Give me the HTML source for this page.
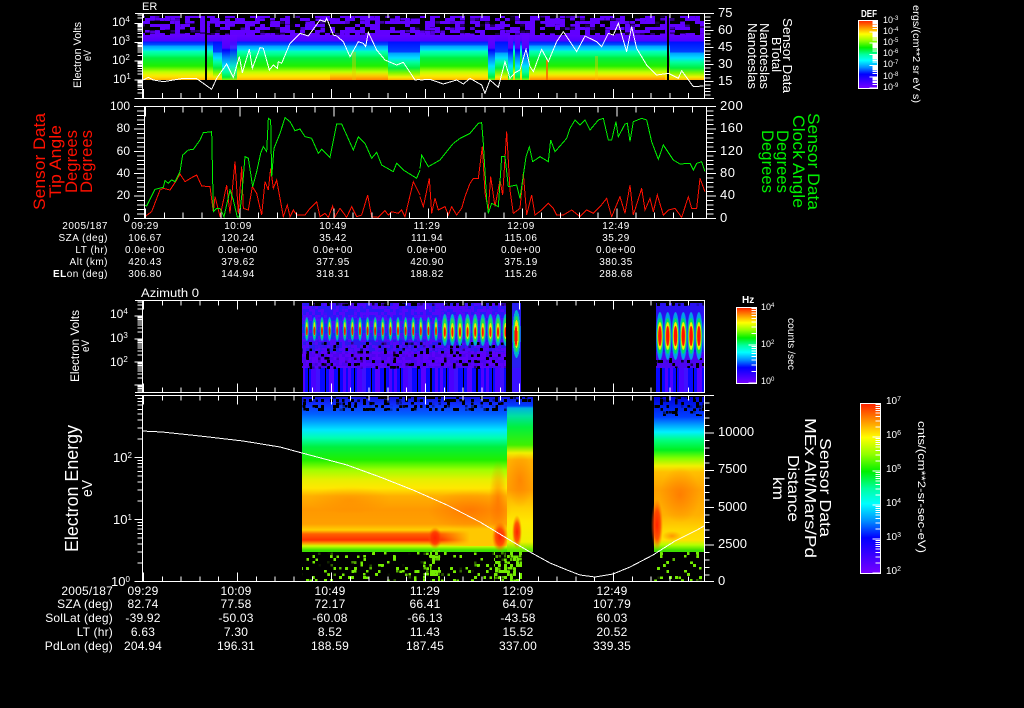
<!DOCTYPE html>
<html lang="en"><head><meta charset="utf-8"><title>Sensor Data</title>
<style>
html,body{margin:0;padding:0;background:#000;width:1024px;height:708px;overflow:hidden}
svg{display:block}
text{font-family:"Liberation Sans",sans-serif;fill:#fff}
.r10 text,.r10{font-size:10px;letter-spacing:.5px}
.r12 text,.r12{font-size:12px;letter-spacing:.2px}
.l{fill:none;stroke:#fff;stroke-width:1;shape-rendering:crispEdges}
.d{fill:none;vector-effect:non-scaling-stroke;stroke-width:1;shape-rendering:crispEdges}
</style></head><body>
<svg xmlns="http://www.w3.org/2000/svg" width="1024" height="708" viewBox="0 0 1024 708">
<defs>
<filter id="nP" filterUnits="userSpaceOnUse" x="0" y="0" width="1024" height="708" color-interpolation-filters="sRGB">
<feTurbulence type="fractalNoise" baseFrequency=".11 .2" numOctaves="2" seed="4"/>
<feColorMatrix values="0 0 0 0 .38 0 0 0 0 0 0 0 0 0 1 30 0 0 0 -14.5" result="n"/>
<feFlood x="2" y="1" width="1" height="1" flood-color="#fff"/><feComposite width="5" height="3"/><feTile result="t"/>
<feComposite in="n" in2="t" operator="in"/><feMorphology operator="dilate" radius="2 1"/><feComposite in2="SourceAlpha" operator="in"/>
</filter>
<filter id="nB" filterUnits="userSpaceOnUse" x="0" y="0" width="1024" height="708" color-interpolation-filters="sRGB">
<feTurbulence type="fractalNoise" baseFrequency=".3" numOctaves="2" seed="31"/>
<feColorMatrix values="0 0 0 0 .4 0 0 0 0 0 0 0 0 0 1 30 0 0 0 -15" result="n"/>
<feFlood x="1" y="1" width="1" height="1" flood-color="#fff"/><feComposite width="3" height="3"/><feTile result="t"/>
<feComposite in="n" in2="t" operator="in"/><feMorphology operator="dilate" radius="1"/><feComposite in2="SourceAlpha" operator="in"/>
</filter>
<filter id="nK" filterUnits="userSpaceOnUse" x="0" y="0" width="1024" height="708" color-interpolation-filters="sRGB">
<feTurbulence type="fractalNoise" baseFrequency=".27" numOctaves="2" seed="9"/>
<feColorMatrix values="0 0 0 0 0 0 0 0 0 0 0 0 0 0 0 30 0 0 0 -17" result="n"/>
<feFlood x="1" y="1" width="1" height="1" flood-color="#fff"/><feComposite width="3" height="3"/><feTile result="t"/>
<feComposite in="n" in2="t" operator="in"/><feMorphology operator="dilate" radius="1"/><feComposite in2="SourceAlpha" operator="in"/>
</filter>
<filter id="nK2" filterUnits="userSpaceOnUse" x="0" y="0" width="1024" height="708" color-interpolation-filters="sRGB">
<feTurbulence type="fractalNoise" baseFrequency=".3" numOctaves="2" seed="17"/>
<feColorMatrix values="0 0 0 0 0 0 0 0 0 0 0 0 0 0 0 30 0 0 0 -19" result="n"/>
<feFlood x="1" y="1" width="1" height="1" flood-color="#fff"/><feComposite width="3" height="3"/><feTile result="t"/>
<feComposite in="n" in2="t" operator="in"/><feMorphology operator="dilate" radius="1"/><feComposite in2="SourceAlpha" operator="in"/>
</filter>
<filter id="nG" filterUnits="userSpaceOnUse" x="0" y="0" width="1024" height="708" color-interpolation-filters="sRGB">
<feTurbulence type="fractalNoise" baseFrequency=".3" numOctaves="2" seed="12"/>
<feColorMatrix values="0 0 0 0 .45 0 0 0 0 .92 0 0 0 0 0 30 0 0 0 -19.5" result="n"/>
<feFlood x="1" y="1" width="1" height="1" flood-color="#fff"/><feComposite width="3" height="3"/><feTile result="t"/>
<feComposite in="n" in2="t" operator="in"/><feMorphology operator="dilate" radius="1"/><feComposite in2="SourceAlpha" operator="in"/>
</filter>
<filter id="nD" filterUnits="userSpaceOnUse" x="0" y="0" width="1024" height="708" color-interpolation-filters="sRGB">
<feTurbulence type="fractalNoise" baseFrequency=".3" numOctaves="2" seed="21"/>
<feColorMatrix values="0 0 0 0 .45 0 0 0 0 .92 0 0 0 0 0 30 0 0 0 -15.5" result="n"/>
<feFlood x="1" y="1" width="1" height="1" flood-color="#fff"/><feComposite width="3" height="3"/><feTile result="t"/>
<feComposite in="n" in2="t" operator="in"/><feMorphology operator="dilate" radius="1"/><feComposite in2="SourceAlpha" operator="in"/>
</filter>

<linearGradient id="cb" x1="0" y1="0" x2="0" y2="1">
<stop offset="0" stop-color="#ff2000"/><stop offset=".1" stop-color="#ff9000"/><stop offset=".2" stop-color="#ffff00"/><stop offset=".3" stop-color="#90ff00"/><stop offset=".4" stop-color="#00f000"/><stop offset=".5" stop-color="#00ffa0"/><stop offset=".59" stop-color="#00ffff"/><stop offset=".69" stop-color="#0090ff"/><stop offset=".79" stop-color="#0000ff"/><stop offset="1" stop-color="#7800ff"/>
</linearGradient>

<linearGradient id="er" gradientUnits="userSpaceOnUse" x1="0" y1="14" x2="0" y2="114">
<stop offset=".2" stop-color="#6a00ff"/><stop offset=".27" stop-color="#5000ff"/><stop offset=".28" stop-color="#0020ff"/><stop offset=".31" stop-color="#0050ff"/><stop offset=".32" stop-color="#00a0ff"/><stop offset=".36" stop-color="#00d8ff"/><stop offset=".37" stop-color="#00ffc0"/><stop offset=".41" stop-color="#00ff80"/><stop offset=".44" stop-color="#00f040"/><stop offset=".52" stop-color="#20f000"/><stop offset=".55" stop-color="#70f800"/><stop offset=".58" stop-color="#c0ff00"/><stop offset=".61" stop-color="#f0f000"/><stop offset=".63" stop-color="#ffe000"/><stop offset=".66" stop-color="#ffb000"/>
</linearGradient>
<linearGradient id="erM" gradientUnits="userSpaceOnUse" x1="0" y1="14" x2="0" y2="114">
<stop offset=".2" stop-color="#6a00ff"/><stop offset=".27" stop-color="#5000ff"/><stop offset=".28" stop-color="#0010ff"/><stop offset=".38" stop-color="#0040ff"/><stop offset=".39" stop-color="#00a0ff"/><stop offset=".44" stop-color="#00e0ff"/><stop offset=".48" stop-color="#00ffa0"/><stop offset=".54" stop-color="#00f040"/><stop offset=".59" stop-color="#80f800"/><stop offset=".63" stop-color="#f0f000"/><stop offset=".66" stop-color="#ffb000"/>
</linearGradient>
<linearGradient id="erL" gradientUnits="userSpaceOnUse" x1="0" y1="14" x2="0" y2="114">
<stop offset=".2" stop-color="#6a00ff"/><stop offset=".34" stop-color="#5000ff"/><stop offset=".36" stop-color="#0000ff"/><stop offset=".44" stop-color="#0080ff"/><stop offset=".52" stop-color="#00e0ff"/><stop offset=".58" stop-color="#00ffa0"/><stop offset=".63" stop-color="#00f040"/><stop offset=".66" stop-color="#80f800"/>
</linearGradient>
<linearGradient id="orb" x1="0" y1="0" x2="0" y2="1"><stop offset="0" stop-color="#ffa000" stop-opacity="0"/><stop offset="1" stop-color="#ff7000"/></linearGradient>

<linearGradient id="g4a" gradientUnits="userSpaceOnUse" x1="0" y1="396" x2="0" y2="596">
<stop offset=".005" stop-color="#1010e0"/><stop offset=".045" stop-color="#1030ff"/><stop offset=".09" stop-color="#0060ff"/><stop offset=".13" stop-color="#00a0ff"/><stop offset=".17" stop-color="#00e8ff"/><stop offset=".21" stop-color="#00ffb0"/><stop offset=".255" stop-color="#00f040"/><stop offset=".32" stop-color="#20f000"/><stop offset=".37" stop-color="#a0ff00"/><stop offset=".42" stop-color="#e8f000"/><stop offset=".46" stop-color="#ffe800"/><stop offset=".5" stop-color="#ffb000"/><stop offset=".57" stop-color="#ff9800"/><stop offset=".64" stop-color="#ffa000"/><stop offset=".67" stop-color="#ffd000"/><stop offset=".69" stop-color="#ff6000"/><stop offset=".72" stop-color="#ff3000"/><stop offset=".735" stop-color="#ff9000"/><stop offset=".75" stop-color="#d0ff00"/><stop offset=".77" stop-color="#40e000"/>
</linearGradient>
<linearGradient id="g4y" gradientUnits="userSpaceOnUse" x1="440" y1="0" x2="470" y2="0"><stop offset="0" stop-color="#ffc000" stop-opacity="0"/><stop offset="1" stop-color="#ffc800"/></linearGradient>
<linearGradient id="g4b" gradientUnits="userSpaceOnUse" x1="0" y1="396" x2="0" y2="596">
<stop offset=".005" stop-color="#1010e0"/><stop offset=".05" stop-color="#0040ff"/><stop offset=".06" stop-color="#00b0e0"/><stop offset=".1" stop-color="#00e0a0"/><stop offset=".155" stop-color="#00f040"/><stop offset=".245" stop-color="#40f000"/><stop offset=".285" stop-color="#f0f000"/><stop offset=".32" stop-color="#ffb000"/><stop offset=".47" stop-color="#ffa000"/><stop offset=".56" stop-color="#ffd000"/><stop offset=".63" stop-color="#ffe800"/><stop offset=".73" stop-color="#f0f000"/><stop offset=".77" stop-color="#60e800"/>
</linearGradient>
<linearGradient id="g4c" gradientUnits="userSpaceOnUse" x1="0" y1="396" x2="0" y2="596">
<stop offset=".005" stop-color="#0000e0"/><stop offset=".105" stop-color="#0040ff"/><stop offset=".145" stop-color="#00a0ff"/><stop offset=".18" stop-color="#00f0ff"/><stop offset=".22" stop-color="#00ff80"/><stop offset=".27" stop-color="#00f020"/><stop offset=".31" stop-color="#80ff00"/><stop offset=".35" stop-color="#f0f000"/><stop offset=".38" stop-color="#ffc000"/><stop offset=".47" stop-color="#ffa000"/><stop offset=".595" stop-color="#ffb000"/><stop offset=".67" stop-color="#ffd800"/><stop offset=".72" stop-color="#ffe000"/><stop offset=".745" stop-color="#b0ff00"/><stop offset=".77" stop-color="#40e000"/>
</linearGradient>
<radialGradient id="rg"><stop offset="0" stop-color="#ff2000"/><stop offset=".55" stop-color="#ff3000" stop-opacity=".8"/><stop offset="1" stop-color="#ff6000" stop-opacity="0"/></radialGradient>
<radialGradient id="og"><stop offset="0" stop-color="#ff6000" stop-opacity=".55"/><stop offset="1" stop-color="#ff6000" stop-opacity="0"/></radialGradient>

<pattern id="b1" patternUnits="userSpaceOnUse" x="303" y="316" width="7.6" height="27">
<ellipse cx="3.8" cy="13" rx="2" ry="12" fill="#00a0e0"/><ellipse cx="3.8" cy="13" rx="1.4" ry="10" fill="#00e070"/><ellipse cx="3.8" cy="13" rx="1" ry="7" fill="#e0f000"/><ellipse cx="3.8" cy="15" rx=".9" ry="4.5" fill="#ff1000"/>
</pattern>
<pattern id="b2" patternUnits="userSpaceOnUse" x="441" y="312" width="7.6" height="38">
<ellipse cx="3.8" cy="18" rx="3" ry="16" fill="#00b0d0"/><ellipse cx="3.8" cy="18" rx="2.2" ry="12" fill="#20e050"/><ellipse cx="3.8" cy="19" rx="1.6" ry="8" fill="#f0e800"/><ellipse cx="3.8" cy="20" rx="1" ry="5" fill="#ff1000"/>
</pattern>
<pattern id="b3" patternUnits="userSpaceOnUse" x="656" y="304" width="7.8" height="62">
<ellipse cx="3.9" cy="32" rx="3.7" ry="24" fill="#00a0e8"/><ellipse cx="3.9" cy="32" rx="3.1" ry="18" fill="#00e060"/><ellipse cx="3.9" cy="32" rx="2.5" ry="14" fill="#f0f000"/><ellipse cx="3.9" cy="32" rx="1.8" ry="10" fill="#ff1000"/>
</pattern>
<pattern id="st" patternUnits="userSpaceOnUse" x="302" y="368" width="46" height="24">
<rect width="46" height="24" fill="#0808ff"/><rect x="0" width="3" height="24" fill="#5000ff"/><rect x="6" width="1" height="24" fill="#000"/><rect x="9" width="5" height="24" fill="#4a00ff"/><rect x="14" width="4" height="24" fill="#4010ff"/><rect x="23" width="1" height="24" fill="#000"/><rect x="27" width="5" height="24" fill="#5a00ff"/><rect x="36" width="2" height="24" fill="#000"/><rect x="41" width="3" height="24" fill="#5000ff"/>
</pattern>

<path id="lg" class="d" stroke="#fff" d="M-5 -30.1H0M-5 -47.7H0M-5 -60.2H0M-5 -69.9H0M-5 -77.8H0M-5 -84.5H0M-5 -90.3H0M-5 -95.4H0M-8 0H0"/>
<clipPath id="c1"><rect x="120" y="13" width="30" height="86"/></clipPath>
<clipPath id="c3"><rect x="120" y="300" width="30" height="93"/></clipPath>
<clipPath id="c4"><rect x="120" y="395" width="30" height="188"/></clipPath>
</defs>

<rect width="1024" height="708" fill="#000"/>

<!-- PANEL 1 -->
<rect x="142" y="16" width="562" height="22" filter="url(#nP)"/>
<rect x="142" y="35" width="562" height="45" fill="url(#er)"/>
<g shape-rendering="crispEdges">
<rect x="388" y="35" width="32" height="45" fill="url(#erM)"/>
<rect x="670" y="35" width="34" height="45" fill="url(#erM)"/>
<rect x="213" y="35" width="9" height="45" fill="url(#erM)"/>
<rect x="222" y="35" width="8" height="45" fill="url(#erL)"/>
<rect x="230" y="35" width="7" height="45" fill="url(#erL)" opacity=".8"/>
<rect x="488" y="35" width="7" height="45" fill="url(#erL)"/>
<rect x="495" y="35" width="13" height="45" fill="url(#erM)"/>
<rect x="508" y="35" width="5" height="45" fill="url(#erL)"/>
<rect x="515" y="35" width="5" height="45" fill="url(#erL)"/>
<rect x="522" y="35" width="7" height="45" fill="url(#erL)"/>
<rect x="330" y="72" width="58" height="8" fill="url(#orb)" opacity=".7"/>
<rect x="530" y="74" width="135" height="6" fill="url(#orb)" opacity=".6"/>
<rect x="352" y="52" width="4" height="28" fill="#e8c800" opacity=".4"/>
<rect x="546" y="60" width="2" height="20" fill="#ff6000" opacity=".8"/>
<rect x="595" y="56" width="3" height="24" fill="#ffc000" opacity=".4"/>
<rect x="205" y="14" width="2" height="67" fill="#000"/>
<rect x="667" y="14" width="2" height="67" fill="#000"/>
</g>
<g fill="none" stroke="#fff" stroke-width="1" shape-rendering="crispEdges">
<polyline class="d" stroke="#fff" transform="scale(.33333)" points="430,240 445,232 460,240 490,245 520,240 545,236 590,236 610,250 635,268 650,235 680,192 700,232 718,170 727,218 748,148 757,205 780,143 790,145 808,210 820,195 832,205 835,185 845,190 870,130 900,100 925,108 960,60 975,65 980,55 1000,105 1010,108 1030,125 1050,170 1075,125 1090,130 1097,140 1105,97 1130,150 1155,180 1190,195 1210,187 1245,240 1260,238"/>
<polyline class="d" stroke="#fff" transform="translate(420,0) scale(.33333)" points="0,240 30,238 70,252 110,240 130,252 150,235 185,255 195,280 210,240 235,262 255,185 270,235 285,218 300,210 318,148 330,200 340,215 365,148 385,185 410,125 430,95 470,155 495,108 530,125 545,140 565,100 580,105 595,70 620,155 635,80 650,145 680,195 710,225 745,220 775,235 785,212 820,260 850,258"/>
</g>
<g class="l">
<path d="M135 13.5H714M142 98.5H714M142.5 13V98M704.5 13V98"/>
<g clip-path="url(#c1)"><use href="#lg" transform="translate(142.5,98.5) scale(1,.187)"/><use href="#lg" transform="translate(142.5,79.8) scale(1,.187)"/><use href="#lg" transform="translate(142.5,61.1) scale(1,.187)"/><use href="#lg" transform="translate(142.5,42.4) scale(1,.187)"/><use href="#lg" transform="translate(142.5,23.7) scale(1,.187)"/><use href="#lg" transform="translate(142.5,5) scale(1,.187)"/></g>
<path d="M143 95.5H705" stroke-width="5" stroke-dasharray="1 17.8"/>
<path d="M143 93.5H705" stroke-width="9" stroke-dasharray="1 93"/>
<path d="M143 16H705" stroke-width="4" stroke-dasharray="1 17.8"/>
<path d="M707.5 13V99" stroke-width="6" stroke-dasharray="1 2.4"/>
<path d="M709 13V99" stroke-width="9" stroke-dasharray="1 16"/>
</g>
<text x="142" y="10" font-size="11">ER</text>
<g font-size="12"><text x="112" y="26">10<tspan dy="-4" font-size="8">4</tspan></text><text x="112" y="45">10<tspan dy="-4" font-size="8">3</tspan></text><text x="112" y="64">10<tspan dy="-4" font-size="8">2</tspan></text><text x="113" y="83">10<tspan dy="-4" font-size="8">1</tspan></text></g>
<g font-size="13"><text x="718" y="17">75</text><text x="718" y="34">60</text><text x="718" y="51">45</text><text x="718" y="68">30</text><text x="718" y="85">15</text></g>
<text transform="translate(81,88) rotate(-90)" font-size="11" textLength="66" lengthAdjust="spacingAndGlyphs">Electron Volts</text>
<text transform="translate(91,61) rotate(-90)" font-size="11" textLength="11" lengthAdjust="spacingAndGlyphs">eV</text>
<g font-size="12.5">
<text transform="translate(783,18) rotate(90)" textLength="75" lengthAdjust="spacingAndGlyphs">Sensor Data</text>
<text transform="translate(772,37) rotate(90)" textLength="35" lengthAdjust="spacingAndGlyphs">BTotal</text>
<text transform="translate(760,23) rotate(90)" textLength="66" lengthAdjust="spacingAndGlyphs">Nanoteslas</text>
<text transform="translate(748,23) rotate(90)" textLength="66" lengthAdjust="spacingAndGlyphs">Nanoteslas</text>
</g>

<!-- top colourbar -->
<rect x="858.5" y="20.5" width="19" height="68" fill="url(#cb)" stroke="#fff" shape-rendering="crispEdges"/>
<g class="l"><use href="#lg" transform="translate(877.5,88) scale(1,.112)"/><use href="#lg" transform="translate(877.5,76.8) scale(1,.112)"/><use href="#lg" transform="translate(877.5,65.6) scale(1,.112)"/><use href="#lg" transform="translate(877.5,54.4) scale(1,.112)"/><use href="#lg" transform="translate(877.5,43.2) scale(1,.112)"/><use href="#lg" transform="translate(877.5,32) scale(1,.112)"/></g>
<text x="861" y="17" font-size="10" font-weight="bold" textLength="16" lengthAdjust="spacingAndGlyphs">DEF</text>
<g font-size="9"><text x="883" y="23">10<tspan dy="-3" font-size="6">-3</tspan></text><text x="883" y="34">10<tspan dy="-3" font-size="6">-4</tspan></text><text x="883" y="45">10<tspan dy="-3" font-size="6">-5</tspan></text><text x="883" y="56">10<tspan dy="-3" font-size="6">-6</tspan></text><text x="883" y="67">10<tspan dy="-3" font-size="6">-7</tspan></text><text x="883" y="79">10<tspan dy="-3" font-size="6">-8</tspan></text><text x="883" y="90">10<tspan dy="-3" font-size="6">-9</tspan></text></g>
<text transform="translate(913,5) rotate(90)" font-size="10" textLength="98" lengthAdjust="spacingAndGlyphs">ergs/(cm**2 sr eV s)</text>

<!-- PANEL 2 -->
<g fill="none" stroke-width="1" shape-rendering="crispEdges">
<polyline class="d" stroke="#ff1000" transform="translate(0,100) scale(.33333)" points="432,352 455,335 480,270 490,265 510,270 530,240 540,222 555,245 580,230 590,225 605,258 630,260 640,335 645,290 660,350 680,255 690,340 705,185 715,340 725,200 730,325 745,330 757,260 770,280 785,345 795,245 805,270 812,205 820,265 830,240 850,350 862,315 870,350 880,330 890,345 915,345 930,325 950,305 960,350 975,340 985,352 998,318 1005,350 1020,325 1040,352 1055,320 1070,350 1085,345 1103,285 1115,350 1135,352 1155,332 1165,345 1175,335 1195,340 1205,330 1215,350 1240,245 1260,285"/>
<polyline class="d" stroke="#ff1000" transform="translate(420,100) scale(.33333)" points="0,290 10,320 28,235 35,340 45,295 55,330 75,320 85,345 95,320 110,345 125,325 135,290 150,250 160,235 175,235 187,140 195,280 205,330 212,230 225,320 240,240 248,285 260,95 270,270 280,340 300,325 310,220 320,345 335,285 345,345 365,330 385,310 400,325 410,345 430,345 455,330 480,350 500,330 520,340 540,320 560,295 575,350 600,290 615,340 630,255 640,345 665,265 675,330 690,295 700,335 712,285 730,345 745,330 765,325 785,352 805,290 815,325 830,325 840,235 855,275"/>
<polyline class="d" stroke="#00f000" transform="translate(0,100) scale(.33333)" points="432,315 440,318 465,268 490,262 495,242 505,250 515,240 525,245 540,215 548,165 565,150 580,148 600,120 610,98 635,95 640,335 650,325 660,325 672,350 690,270 700,300 712,352 718,350 725,290 735,170 745,175 758,260 770,215 782,160 790,140 800,155 805,55 812,60 815,230 822,145 840,100 855,53 870,65 885,92 900,87 915,110 935,115 955,160 965,148 990,172 1010,72 1025,72 1060,150 1075,110 1095,130 1115,175 1130,157 1145,195 1180,215 1190,190 1210,210 1250,235 1260,210"/>
<polyline class="d" stroke="#00f000" transform="translate(420,100) scale(.33333)" points="0,205 5,165 25,200 60,180 100,130 120,115 150,100 175,70 185,68 190,130 200,300 205,340 215,310 235,320 245,170 255,170 265,260 290,255 300,295 318,170 328,140 338,185 360,170 385,185 392,120 405,155 440,115 450,85 465,60 480,75 495,60 510,90 535,60 550,55 565,120 575,120 588,65 595,110 615,72 622,70 630,125 640,65 665,55 680,60 695,125 715,178 730,135 760,180 780,192 810,190 820,210 830,190 845,185 855,215"/>
</g>
<g class="l">
<path d="M134 106.5H716M134 218.5H716M144.5 106V218M706.5 106V218"/>
<path d="M140.5 106V219" stroke-width="7" stroke-dasharray="1 3.48"/>
<path d="M139 106V219" stroke-width="10" stroke-dasharray="1 21.4"/>
<path d="M710 106V219" stroke-width="7" stroke-dasharray="1 3.48"/>
<path d="M711 106V219" stroke-width="10" stroke-dasharray="1 21.4"/>
<path d="M145 215.5H707" stroke-width="6" stroke-dasharray="1 17.86"/>
<path d="M145 213.5H707" stroke-width="10" stroke-dasharray="1 93.3"/>
<path d="M145 109.5H707" stroke-width="6" stroke-dasharray="1 17.86"/>
<path d="M145 111.5H707" stroke-width="10" stroke-dasharray="1 93.3"/>
</g>
<g font-size="12" text-anchor="end"><text x="130" y="110">100</text><text x="130" y="132">80</text><text x="130" y="155">60</text><text x="130" y="177">40</text><text x="130" y="199">20</text><text x="130" y="222">0</text></g>
<g font-size="13" letter-spacing=".5"><text x="720" y="110">200</text><text x="720" y="132">160</text><text x="720" y="155">120</text><text x="720" y="177">80</text><text x="720" y="199">40</text><text x="720" y="222">0</text></g>
<g font-size="16.5">
<text style="fill:#ff1000" transform="translate(45,210) rotate(-90)" textLength="97" lengthAdjust="spacingAndGlyphs">Sensor Data</text>
<text style="fill:#ff1000" transform="translate(61,198) rotate(-90)" textLength="73" lengthAdjust="spacingAndGlyphs">Tip Angle</text>
<text style="fill:#ff1000" transform="translate(77,193) rotate(-90)" textLength="63" lengthAdjust="spacingAndGlyphs">Degrees</text>
<text style="fill:#ff1000" transform="translate(92,193) rotate(-90)" textLength="63" lengthAdjust="spacingAndGlyphs">Degrees</text>
</g>
<g font-size="16.5">
<text style="fill:#00f000" transform="translate(808,113) rotate(90)" textLength="97" lengthAdjust="spacingAndGlyphs">Sensor Data</text>
<text style="fill:#00f000" transform="translate(793,115) rotate(90)" textLength="93" lengthAdjust="spacingAndGlyphs">Clock Angle</text>
<text style="fill:#00f000" transform="translate(777,130) rotate(90)" textLength="63" lengthAdjust="spacingAndGlyphs">Degrees</text>
<text style="fill:#00f000" transform="translate(762,130) rotate(90)" textLength="63" lengthAdjust="spacingAndGlyphs">Degrees</text>
</g>
<g class="r10" text-anchor="end"><text x="108" y="229">2005/187</text><text x="108" y="241">SZA (deg)</text><text x="108" y="253">LT (hr)</text><text x="108" y="265">Alt (km)</text><text x="108" y="277"><tspan font-weight="bold">EL</tspan>on (deg)</text></g>
<g class="r10" text-anchor="middle">
<text x="145" y="229">09:29</text><text x="238" y="229">10:09</text><text x="333" y="229">10:49</text><text x="427" y="229">11:29</text><text x="521" y="229">12:09</text><text x="616" y="229">12:49</text>
<text x="145" y="241">106.67</text><text x="238" y="241">120.24</text><text x="333" y="241">35.42</text><text x="427" y="241">111.94</text><text x="521" y="241">115.06</text><text x="616" y="241">35.29</text>
<text x="145" y="253">0.0e+00</text><text x="238" y="253">0.0e+00</text><text x="333" y="253">0.0e+00</text><text x="427" y="253">0.0e+00</text><text x="521" y="253">0.0e+00</text><text x="616" y="253">0.0e+00</text>
<text x="145" y="265">420.43</text><text x="238" y="265">379.62</text><text x="333" y="265">377.95</text><text x="427" y="265">420.90</text><text x="521" y="265">375.19</text><text x="616" y="265">380.35</text>
<text x="145" y="277">306.80</text><text x="238" y="277">144.94</text><text x="333" y="277">318.31</text><text x="427" y="277">188.82</text><text x="521" y="277">115.26</text><text x="616" y="277">288.68</text>
</g>

<!-- PANEL 3 -->
<g shape-rendering="crispEdges">
<rect x="302" y="303" width="204" height="17" fill="#2818f8"/>
<rect x="302" y="320" width="204" height="20" fill="#1430f0"/>
<rect x="302" y="340" width="204" height="12" fill="#2a18f0"/>
<rect x="302" y="352" width="204" height="16" fill="#4c04f0"/>
<rect x="512" y="303" width="9" height="65" fill="#2820f0"/>
<rect x="656" y="303" width="48" height="65" fill="#2810f0"/>
<rect x="656" y="352" width="48" height="16" fill="#4c04f0"/>
<rect x="303" y="368" width="203" height="24" fill="url(#st)"/>
<rect x="512" y="368" width="9" height="24" fill="#3810ff"/>
<rect x="656" y="368" width="48" height="24" fill="url(#st)"/>
<rect x="302" y="303" width="204" height="65" filter="url(#nB)" opacity=".7"/>
<rect x="302" y="302" width="204" height="4" filter="url(#nK)"/>
<rect x="302" y="342" width="204" height="27" filter="url(#nK2)"/>
<rect x="656" y="302" width="48" height="4" filter="url(#nK)"/>
<rect x="656" y="358" width="48" height="10" filter="url(#nK2)"/>
<rect x="303" y="316" width="138" height="27" fill="url(#b1)"/>
<rect x="441" y="312" width="65" height="38" fill="url(#b2)"/>
<rect x="656" y="304" width="48" height="62" fill="url(#b3)"/>
<ellipse cx="516.5" cy="334" rx="4" ry="24" fill="#00b0d0"/><ellipse cx="516.5" cy="334" rx="3" ry="18" fill="#20e050"/><ellipse cx="516.5" cy="334" rx="2.2" ry="14" fill="#f0e800"/><ellipse cx="516" cy="336" rx="1.5" ry="10" fill="#ff1000"/>
</g>
<g class="l">
<path d="M135 300.5H705M135 392.5H705M142.5 300V392M704.5 300V392"/>
<g clip-path="url(#c3)"><use href="#lg" transform="translate(142.5,408) scale(1,.23)"/><use href="#lg" transform="translate(142.5,385) scale(1,.23)"/><use href="#lg" transform="translate(142.5,362) scale(1,.23)"/><use href="#lg" transform="translate(142.5,339) scale(1,.23)"/><use href="#lg" transform="translate(142.5,316) scale(1,.23)"/></g>
<path d="M143 390H705" stroke-width="5" stroke-dasharray="1 17.8"/>
<path d="M143 388H705" stroke-width="9" stroke-dasharray="1 93"/>
<path d="M143 303H705" stroke-width="5" stroke-dasharray="1 17.8"/>
<path d="M143 305H705" stroke-width="9" stroke-dasharray="1 93"/>
</g>
<text x="141" y="297" font-size="11.5" textLength="58" lengthAdjust="spacingAndGlyphs">Azimuth 0</text>
<g font-size="12"><text x="110" y="318">10<tspan dy="-4" font-size="8">4</tspan></text><text x="110" y="342">10<tspan dy="-4" font-size="8">3</tspan></text><text x="110" y="366">10<tspan dy="-4" font-size="8">2</tspan></text></g>
<text transform="translate(79,382) rotate(-90)" font-size="11.5" textLength="72" lengthAdjust="spacingAndGlyphs">Electron Volts</text>
<text transform="translate(89,352) rotate(-90)" font-size="11" textLength="12" lengthAdjust="spacingAndGlyphs">eV</text>
<rect x="736.5" y="307.5" width="20" height="76" fill="url(#cb)" stroke="#fff" shape-rendering="crispEdges"/>
<g class="l"><use href="#lg" transform="translate(756.5,383) scale(1,.38)"/><use href="#lg" transform="translate(756.5,345) scale(1,.38)"/></g>
<text x="742" y="303" font-size="10" font-weight="bold">Hz</text>
<g font-size="9"><text x="761" y="310">10<tspan dy="-3" font-size="6">4</tspan></text><text x="761" y="347">10<tspan dy="-3" font-size="6">2</tspan></text><text x="761" y="384">10<tspan dy="-3" font-size="6">0</tspan></text></g>
<text transform="translate(788,318) rotate(90)" font-size="10" textLength="52" lengthAdjust="spacingAndGlyphs">counts /sec</text>

<!-- PANEL 4 -->
<rect x="302" y="397" width="205" height="155" fill="url(#g4a)"/>
<rect x="440" y="529" width="67" height="17" fill="url(#g4y)"/>
<rect x="507" y="397" width="26" height="155" fill="url(#g4b)"/>
<rect x="654" y="397" width="50" height="155" fill="url(#g4c)"/>
<ellipse cx="470" cy="510" rx="42" ry="20" fill="url(#og)"/>
<ellipse cx="498" cy="500" rx="9" ry="40" fill="url(#og)"/>
<ellipse cx="350" cy="500" rx="40" ry="14" fill="url(#og)" opacity=".5"/>
<ellipse cx="520" cy="480" rx="13" ry="28" fill="url(#og)" opacity=".8"/>
<ellipse cx="680" cy="495" rx="20" ry="28" fill="url(#og)"/>
<ellipse cx="657" cy="525" rx="6" ry="26" fill="url(#rg)"/>
<ellipse cx="672" cy="536" rx="10" ry="5" fill="url(#og)"/>
<ellipse cx="435" cy="538" rx="7" ry="11" fill="url(#rg)"/>
<ellipse cx="500" cy="537" rx="8" ry="15" fill="url(#rg)"/>
<ellipse cx="517" cy="532" rx="5" ry="17" fill="url(#rg)"/>
<rect x="302" y="396" width="205" height="15" filter="url(#nK)"/>
<rect x="507" y="396" width="27" height="6" filter="url(#nK)"/>
<rect x="654" y="396" width="50" height="20" filter="url(#nK)"/>
<rect x="302" y="552" width="204" height="29" filter="url(#nG)"/>
<rect x="654" y="552" width="50" height="29" filter="url(#nG)"/>
<rect x="494" y="552" width="28" height="29" filter="url(#nD)"/>
<rect x="430" y="550" width="10" height="31" filter="url(#nD)"/>
<polyline fill="none" stroke="#fff" stroke-width="1" shape-rendering="crispEdges" points="142,431 162,432 200,436 243,441 280,447 302,453 347,465 380,477 413,490 447,505 480,522 513,542 530,552 550,563 567,570 580,575 595,577 613,574 630,567 653,555 675,541 697,530 704,526"/>
<g class="l">
<path d="M135 395.5H714M135 581.5H714M142.5 395V582M704.5 395V582"/>
<g clip-path="url(#c4)"><use href="#lg" transform="translate(142.5,581.5) scale(1,.62)"/><use href="#lg" transform="translate(142.5,519.5) scale(1,.62)"/><use href="#lg" transform="translate(142.5,457.5) scale(1,.62)"/></g>
<path d="M143 579H705" stroke-width="5" stroke-dasharray="1 17.8"/>
<path d="M143 577H705" stroke-width="9" stroke-dasharray="1 93"/>
<path d="M143 398H705" stroke-width="5" stroke-dasharray="1 17.8"/>
<path d="M143 400H705" stroke-width="9" stroke-dasharray="1 93"/>
<path d="M707 395V582" stroke-width="5" stroke-dasharray="1 6.48"/>
<path d="M709 395V582" stroke-width="10" stroke-dasharray="1 36.4"/>
</g>
<g font-size="13"><text x="113" y="462">10<tspan dy="-4" font-size="8">2</tspan></text><text x="113" y="524">10<tspan dy="-4" font-size="8">1</tspan></text><text x="111" y="586">10<tspan dy="-4" font-size="8">0</tspan></text></g>
<g font-size="13"><text x="718" y="436">10000</text><text x="718" y="473">7500</text><text x="718" y="511">5000</text><text x="718" y="548">2500</text><text x="718" y="585">0</text></g>
<text transform="translate(78,552) rotate(-90)" font-size="18" textLength="127" lengthAdjust="spacingAndGlyphs">Electron Energy</text>
<text transform="translate(92,497) rotate(-90)" font-size="15" textLength="17" lengthAdjust="spacingAndGlyphs">eV</text>
<g font-size="16">
<text transform="translate(820,438) rotate(90)" textLength="99" lengthAdjust="spacingAndGlyphs">Sensor Data</text>
<text transform="translate(805,418) rotate(90)" textLength="140" lengthAdjust="spacingAndGlyphs">MEx Alt/Mars/Pd</text>
<text transform="translate(788,455) rotate(90)" textLength="67" lengthAdjust="spacingAndGlyphs">Distance</text>
<text transform="translate(773,477) rotate(90)" textLength="23" lengthAdjust="spacingAndGlyphs">km</text>
</g>
<rect x="860.5" y="403.5" width="20" height="170" fill="url(#cb)" stroke="#fff" shape-rendering="crispEdges"/>
<g class="l"><use href="#lg" transform="translate(880.5,573) scale(1,.34)"/><use href="#lg" transform="translate(880.5,539) scale(1,.34)"/><use href="#lg" transform="translate(880.5,505) scale(1,.34)"/><use href="#lg" transform="translate(880.5,471) scale(1,.34)"/><use href="#lg" transform="translate(880.5,437) scale(1,.34)"/></g>
<g font-size="10"><text x="886" y="404">10<tspan dy="-3" font-size="7">7</tspan></text><text x="886" y="438">10<tspan dy="-3" font-size="7">6</tspan></text><text x="886" y="472">10<tspan dy="-3" font-size="7">5</tspan></text><text x="886" y="506">10<tspan dy="-3" font-size="7">4</tspan></text><text x="886" y="540">10<tspan dy="-3" font-size="7">3</tspan></text><text x="886" y="574">10<tspan dy="-3" font-size="7">2</tspan></text></g>
<text transform="translate(918,421) rotate(90)" font-size="11" textLength="132" lengthAdjust="spacingAndGlyphs">cnts/(cm**2-sr-sec-eV)</text>

<g class="r12" text-anchor="end"><text x="113" y="595">2005/187</text><text x="113" y="608">SZA (deg)</text><text x="113" y="622">SolLat (deg)</text><text x="113" y="636">LT (hr)</text><text x="113" y="650">PdLon (deg)</text></g>
<g class="r12" text-anchor="middle">
<text x="143" y="595">09:29</text><text x="236" y="595">10:09</text><text x="330" y="595">10:49</text><text x="425" y="595">11:29</text><text x="518" y="595">12:09</text><text x="612" y="595">12:49</text>
<text x="143" y="608">82.74</text><text x="236" y="608">77.58</text><text x="330" y="608">72.17</text><text x="425" y="608">66.41</text><text x="518" y="608">64.07</text><text x="612" y="608">107.79</text>
<text x="143" y="622">-39.92</text><text x="236" y="622">-50.03</text><text x="330" y="622">-60.08</text><text x="425" y="622">-66.13</text><text x="518" y="622">-43.58</text><text x="612" y="622">60.03</text>
<text x="143" y="636">6.63</text><text x="236" y="636">7.30</text><text x="330" y="636">8.52</text><text x="425" y="636">11.43</text><text x="518" y="636">15.52</text><text x="612" y="636">20.52</text>
<text x="143" y="650">204.94</text><text x="236" y="650">196.31</text><text x="330" y="650">188.59</text><text x="425" y="650">187.45</text><text x="518" y="650">337.00</text><text x="612" y="650">339.35</text>
</g>
</svg>
</body></html>
